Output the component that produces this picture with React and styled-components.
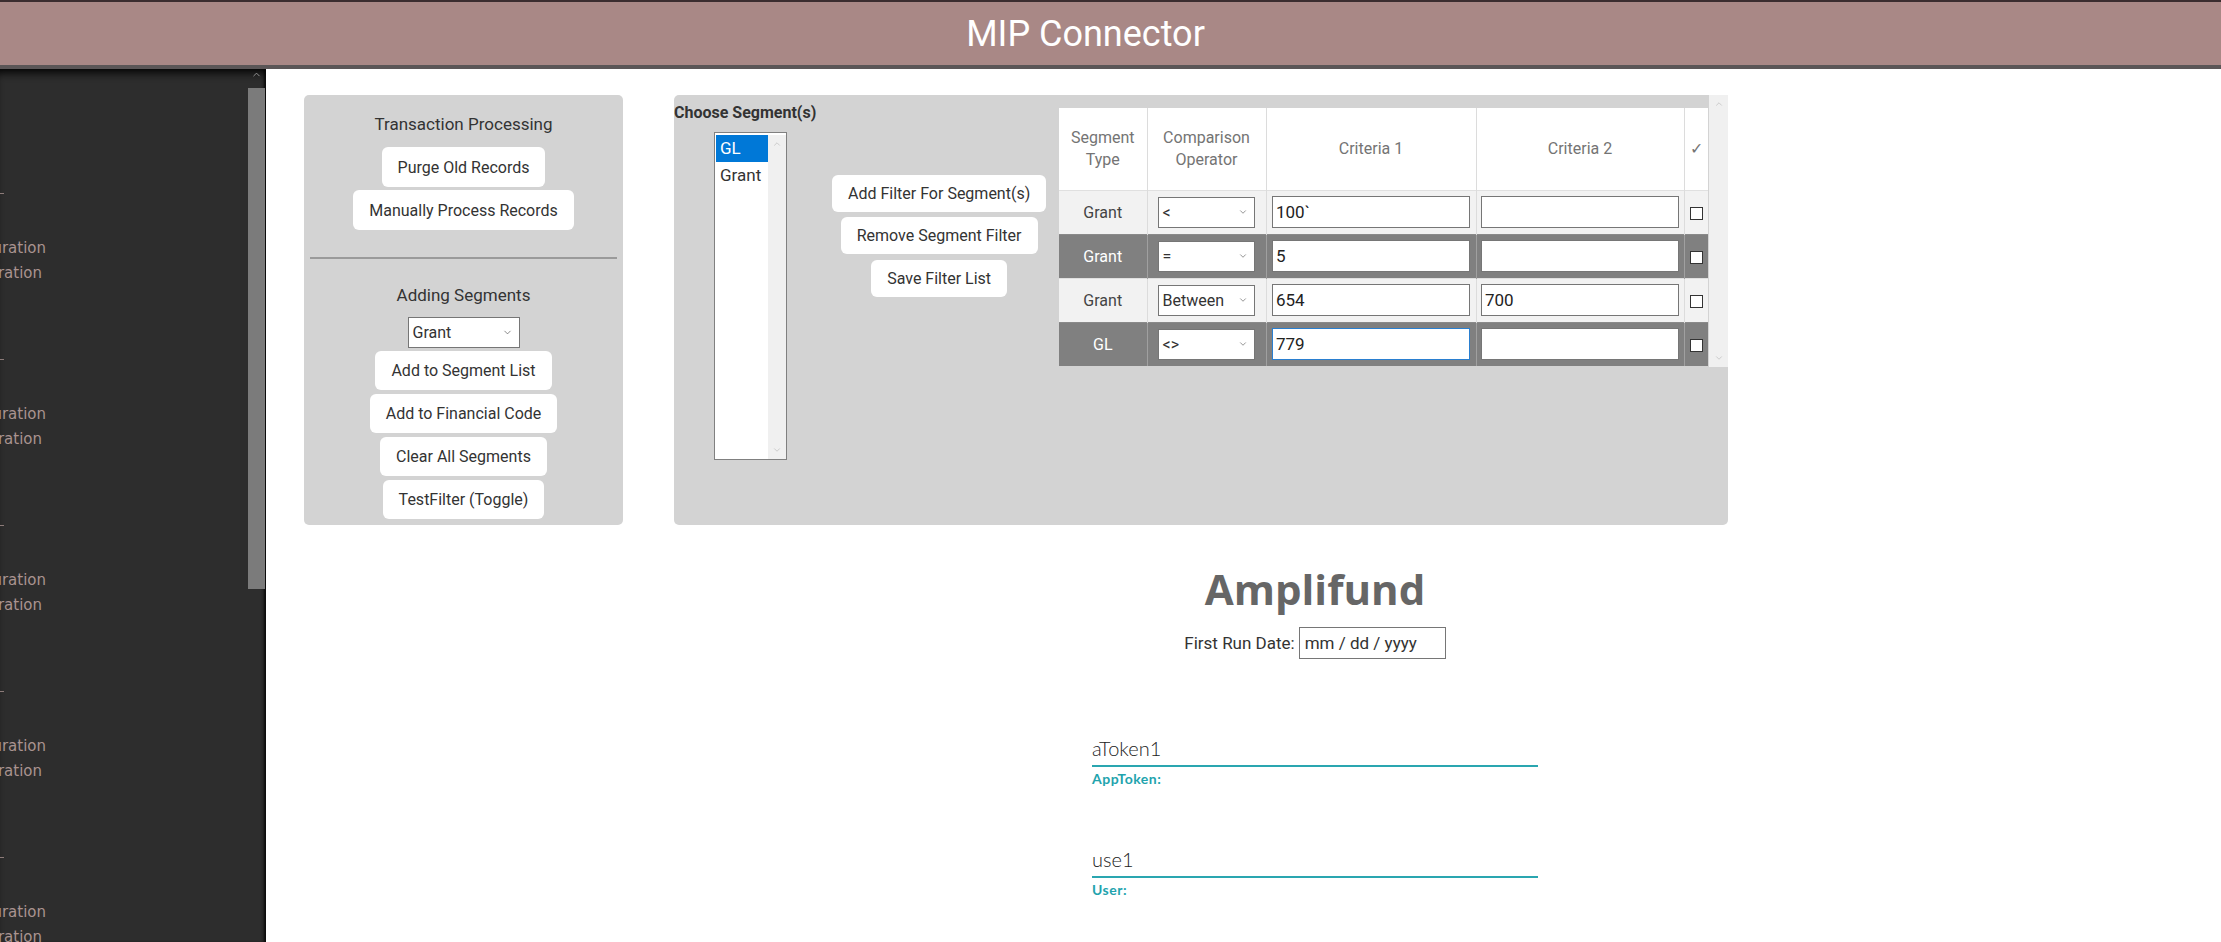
import React from 'react';
import styled, { createGlobalStyle } from 'styled-components';
import { ChevronDown, ChevronUp } from 'lucide-react';

const GlobalStyle = createGlobalStyle`
  html, body {
    margin: 0;
    padding: 0;
    background: #fff;
    overflow: hidden;
  }

  body {
    font-family: Roboto, "Open Sans", sans-serif;
    color: #333;
  }

  * {
    box-sizing: border-box;
  }
`;

const Page = styled.div`
  height: 942px;
  display: flex;
  flex-direction: column;
`;

const Header = styled.header`
  height: 69px;
  flex-shrink: 0;
  background: #a98886;
  border-top: 2px solid #3b2d2f;
  border-bottom: 4px solid #5b5657;

  display: flex;
  align-items: center;
  justify-content: center;
  padding-right: 50px;
`;

const Title = styled.h1`
  margin: 0;
  color: #fff;
  font-size: 36px;
  font-weight: 400;
`;

const Body = styled.div`
  flex: 1;
  min-height: 0;
  display: flex;
`;

const Sidebar = styled.aside`
  width: 266px;
  flex-shrink: 0;
  background: #2d2d2d;
  display: flex;
  box-shadow: inset 0 9px 8px -5px rgba(0, 0, 0, 0.9), inset -3px 0 3px -1px rgba(0, 0, 0, 0.8);
`;

const SideContent = styled.nav`
  flex: 1;
  overflow: hidden;
  padding-top: 114px;
`;

const SideGroup = styled.div`
  height: 166px;
  padding-top: 10px;
`;

const SideDash = styled.div`
  width: 4px;
  height: 1px;
  background: #8c7b79;
`;

const SideLines = styled.div`
  margin-top: 42px;
`;

const SideLine = styled.div`
  width: ${p => p.$end}px;
  height: 25px;
  line-height: 25px;
  overflow: hidden;
  direction: rtl;
  white-space: nowrap;
  font-family: "DejaVu Sans", sans-serif;
  font-size: 15px;
  color: #a99390;
`;

const SideScroll = styled.div`
  width: 17px;
  margin-right: 1px;
  display: flex;
  flex-direction: column;
  align-items: center;
  color: #9a9a9a;
`;

const SideThumb = styled.div`
  width: 17px;
  height: 501px;
  margin-top: 8px;
  background: #7b7b7b;
`;

const Main = styled.main`
  flex: 1;
  padding: 26px 0 0 38px;
`;

const TopRow = styled.div`
  display: flex;
  align-items: flex-start;
  gap: 51px;
`;

const LeftPanel = styled.section`
  width: 319px;
  height: 430px;
  background: #d3d3d3;
  border-radius: 5px;
  padding-top: 18px;

  display: flex;
  flex-direction: column;
  align-items: center;
`;

const PanelHeading = styled.div`
  font-size: 17px;
  line-height: 22px;
  color: #333;
  margin-top: ${p => p.$top || 0}px;
`;

const Button = styled.button`
  height: ${p => p.$h || 39}px;
  margin-top: ${p => p.$top || 4}px;
  padding: 0 16px;
  border: none;
  border-radius: 6px;
  background: #fff;
  color: #333;
  font-family: Roboto, "Open Sans", sans-serif;
  font-size: 16px;
  white-space: nowrap;
`;

const Divider = styled.hr`
  align-self: stretch;
  margin: 27px 6px 0;
  border: none;
  height: 2px;
  background: #9a9a9a;
`;

const FakeSelect = styled.div`
  width: ${p => p.$w}px;
  height: 31px;
  margin-top: ${p => p.$top || 0}px;
  padding: 0 6px 0 4px;
  border: 1px solid #767676;
  background: #fff;
  color: #333;
  font-size: 16px;

  display: flex;
  align-items: center;
  justify-content: space-between;
`;

const RightPanel = styled.section`
  width: 1054px;
  height: 430px;
  background: #d3d3d3;
  border-radius: 5px;
  display: flex;
`;

const SegmentColumn = styled.div`
  width: 385px;
  padding-top: 7px;
`;

const SegmentTitle = styled.div`
  font-size: 16px;
  font-weight: 700;
  line-height: 22px;
  color: #333;
`;

const SegmentRow = styled.div`
  display: flex;
  align-items: flex-start;
  margin-top: 8px;
`;

const ListBox = styled.div`
  width: 73px;
  height: 328px;
  margin-left: 40px;
  border: 1px solid #808080;
  background: #fff;
  display: flex;
  padding: 2px 0 0 1px;
`;

const ListOptions = styled.div`
  flex: 1;
`;

const ListOption = styled.div`
  height: 27px;
  line-height: 27px;
  padding-left: 4px;
  font-size: 17px;
  color: ${p => (p.$selected ? '#fff' : '#333')};
  background: ${p => (p.$selected ? '#0078d7' : 'transparent')};
`;

const ScrollTrack = styled.div`
  width: ${p => p.$w || 18}px;
  align-self: stretch;
  background: #f0f0f0;
  color: #b5b5b5;

  display: flex;
  flex-direction: column;
  justify-content: space-between;
  align-items: center;
  padding: 4px 0;
`;

const ButtonStack = styled.div`
  margin-left: 45px;
  margin-top: 39px;
  display: flex;
  flex-direction: column;
  align-items: center;
`;

const TableArea = styled.div`
  flex: 1;
  height: 272px;
  display: flex;
`;

const TableWrap = styled.div`
  flex: 1;
  padding-top: 13px;
`;

const FilterTable = styled.table`
  width: 649px;
  border-collapse: collapse;
  table-layout: fixed;
`;

const HeadCell = styled.th`
  height: 82px;
  background: #fff;
  border-left: 1px solid #dcdcdc;
  color: #747474;
  font-size: 16px;
  font-weight: 400;
  line-height: 22px;
  text-align: center;
  padding: 0 2px;

  &:first-child {
    border-left: none;
  }
`;

const Row = styled.tr`
  height: 44px;
  background: ${p => (p.$dark ? '#808080' : '#f2f2f2')};
  color: ${p => (p.$dark ? '#fff' : '#444')};
`;

const Cell = styled.td`
  border-top: 1px solid ${p => (p.$dark ? '#8a8a8a' : '#e0e0e0')};
  border-left: 1px solid ${p => (p.$dark ? '#a0a0a0' : '#dcdcdc')};
  text-align: center;
  font-size: 16px;
  padding: 0;

  &:first-child {
    border-left: none;
  }
`;

const SelectCell = styled(Cell)`
  padding-left: 10px;
  text-align: left;
`;

const CriteriaInput = styled.input`
  display: block;
  width: 198px;
  height: 32px;
  margin: 0 auto;
  padding: 0 3px;
  border: 1px solid ${p => (p.$focused ? '#2a7fd0' : '#767676')};
  background: #fff;
  color: #222;
  font-family: Roboto, "Open Sans", sans-serif;
  font-size: 17px;
  outline: none;
`;

const Check = styled.span`
  display: inline-block;
  width: 13px;
  height: 13px;
  border: 1px solid #333;
  background: #fff;
  vertical-align: middle;
`;

const Bottom = styled.section`
  margin-left: 105px;
  display: flex;
  flex-direction: column;
  align-items: center;
`;

const Brand = styled.h2`
  margin: 38px 0 0;
  font-family: "Open Sans", Roboto, sans-serif;
  font-size: 42px;
  font-weight: 700;
  line-height: 52px;
  color: #666;
`;

const DateRow = styled.div`
  margin-top: 12px;
  display: flex;
  align-items: center;
  gap: 4px;
  font-size: 17px;
  color: #333;
`;

const DateInput = styled.input`
  width: 147px;
  height: 32px;
  padding: 0 5px;
  border: 1px solid #767676;
  font-family: Roboto, "Open Sans", sans-serif;
  font-size: 17px;
  color: #333;

  &::placeholder {
    color: #333;
  }
`;

const TokenField = styled.div`
  width: 446px;
  margin-top: ${p => p.$top}px;
`;

const TokenInput = styled.input`
  display: block;
  width: 100%;
  height: 37px;
  padding: 0;
  border: none;
  border-bottom: 2px solid #2aa6b0;
  font-family: Lato, "Open Sans", sans-serif;
  font-size: 20px;
  font-weight: 300;
  color: #222;
  outline: none;
`;

const TokenLabel = styled.label`
  display: block;
  margin-top: 4px;
  font-family: Lato, "Open Sans", sans-serif;
  font-size: 14px;
  font-weight: 700;
  letter-spacing: 0.5px;
  line-height: 15px;
  color: #22a3ad;
`;

const sideGroups = [0, 1, 2, 3, 4];

const filters = [
  { seg: 'Grant', op: '<', c1: '100`', c2: '' },
  { seg: 'Grant', op: '=', c1: '5', c2: '', dark: true },
  { seg: 'Grant', op: 'Between', c1: '654', c2: '700' },
  { seg: 'GL', op: '<>', c1: '779', c2: '', dark: true, focused: true },
];

export default function App() {
  return (
    <Page>
      <GlobalStyle />
      <Header>
        <Title>MIP Connector</Title>
      </Header>
      <Body>
        <Sidebar>
          <SideContent>
            {sideGroups.map(i => (
              <SideGroup key={i}>
                <SideDash />
                <SideLines>
                  <SideLine $end={46}>Configuration</SideLine>
                  <SideLine $end={42}>Configuration</SideLine>
                </SideLines>
              </SideGroup>
            ))}
          </SideContent>
          <SideScroll>
            <ChevronUp size={11} strokeWidth={2} />
            <SideThumb />
          </SideScroll>
        </Sidebar>

        <Main>
          <TopRow>
            <LeftPanel>
              <PanelHeading>Transaction Processing</PanelHeading>
              <Button $top={12} $h={40}>Purge Old Records</Button>
              <Button $top={3} $h={40}>Manually Process Records</Button>
              <Divider />
              <PanelHeading $top={25}>Adding Segments</PanelHeading>
              <FakeSelect $w={112} $top={11}>
                Grant
                <ChevronDown size={11} strokeWidth={1.5} color="#555" />
              </FakeSelect>
              <Button $top={3}>Add to Segment List</Button>
              <Button>Add to Financial Code</Button>
              <Button>Clear All Segments</Button>
              <Button>TestFilter (Toggle)</Button>
            </LeftPanel>

            <RightPanel>
              <SegmentColumn>
                <SegmentTitle>Choose Segment(s)</SegmentTitle>
                <SegmentRow>
                  <ListBox>
                    <ListOptions>
                      <ListOption $selected>GL</ListOption>
                      <ListOption>Grant</ListOption>
                    </ListOptions>
                    <ScrollTrack>
                      <ChevronUp size={10} strokeWidth={1.5} />
                      <ChevronDown size={10} strokeWidth={1.5} />
                    </ScrollTrack>
                  </ListBox>
                  <ButtonStack>
                    <Button $top={0} $h={37}>Add Filter For Segment(s)</Button>
                    <Button $top={5} $h={37}>Remove Segment Filter</Button>
                    <Button $top={6} $h={37}>Save Filter List</Button>
                  </ButtonStack>
                </SegmentRow>
              </SegmentColumn>

              <TableArea>
                <TableWrap>
                  <FilterTable>
                    <colgroup>
                      <col style={{ width: 88 }} />
                      <col style={{ width: 119 }} />
                      <col style={{ width: 210 }} />
                      <col style={{ width: 208 }} />
                      <col style={{ width: 24 }} />
                    </colgroup>
                    <thead>
                      <tr>
                        <HeadCell>Segment Type</HeadCell>
                        <HeadCell>Comparison Operator</HeadCell>
                        <HeadCell>Criteria 1</HeadCell>
                        <HeadCell>Criteria 2</HeadCell>
                        <HeadCell>✓</HeadCell>
                      </tr>
                    </thead>
                    <tbody>
                      {filters.map((f, i) => (
                        <Row key={i} $dark={f.dark}>
                          <Cell $dark={f.dark}>{f.seg}</Cell>
                          <SelectCell $dark={f.dark}>
                            <FakeSelect $w={97}>
                              {f.op}
                              <ChevronDown size={10} strokeWidth={1.5} color="#555" />
                            </FakeSelect>
                          </SelectCell>
                          <Cell $dark={f.dark}>
                            <CriteriaInput defaultValue={f.c1} $focused={f.focused} />
                          </Cell>
                          <Cell $dark={f.dark}>
                            <CriteriaInput defaultValue={f.c2} />
                          </Cell>
                          <Cell $dark={f.dark}>
                            <Check />
                          </Cell>
                        </Row>
                      ))}
                    </tbody>
                  </FilterTable>
                </TableWrap>
                <ScrollTrack $w={19}>
                  <ChevronUp size={10} strokeWidth={1.5} />
                  <ChevronDown size={10} strokeWidth={1.5} />
                </ScrollTrack>
              </TableArea>
            </RightPanel>
          </TopRow>

          <Bottom>
            <Brand>Amplifund</Brand>
            <DateRow>
              First Run Date:
              <DateInput placeholder="mm / dd / yyyy" />
            </DateRow>
            <TokenField $top={71}>
              <TokenInput defaultValue="aToken1" />
              <TokenLabel>AppToken:</TokenLabel>
            </TokenField>
            <TokenField $top={55}>
              <TokenInput defaultValue="use1" />
              <TokenLabel>User:</TokenLabel>
            </TokenField>
          </Bottom>
        </Main>
      </Body>
    </Page>
  );
}
